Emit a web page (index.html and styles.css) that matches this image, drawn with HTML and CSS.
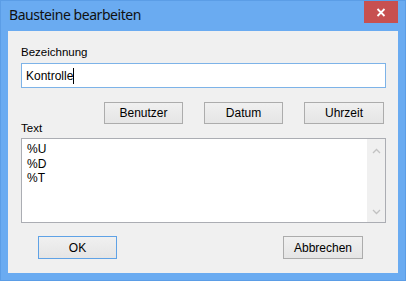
FILE: index.html
```html
<!DOCTYPE html>
<html>
<head>
<meta charset="utf-8">
<link rel="stylesheet" href="styles.css">
</head>
<body>
<div class="window">
  <div class="titlebar">
    <div class="title">Bausteine bearbeiten</div>
    <div class="close">
      <svg width="10" height="9" viewBox="0 0 10 9"><path d="M1.5 1 L8.5 8 M8.5 1 L1.5 8" stroke="#fff" stroke-width="1.8" fill="none"/></svg>
    </div>
  </div>
  <div class="client">
    <div class="label first">Bezeichnung</div>
    <div class="input"><span class="value">Kontrolle</span><span class="caret"></span></div>
    <div class="btnrow">
      <div class="btn">Benutzer</div>
      <div class="btn">Datum</div>
      <div class="btn">Uhrzeit</div>
    </div>
    <div class="label second">Text</div>
    <div class="textarea">
      <div class="lines">
        <div>%U</div>
        <div>%D</div>
        <div>%T</div>
      </div>
      <div class="scrollbar">
        <svg width="9" height="6" viewBox="0 0 9 6"><path d="M1 5 L4.5 1.5 L8 5" stroke="#c2c2c2" stroke-width="1.3" fill="none"/></svg>
        <svg width="9" height="6" viewBox="0 0 9 6"><path d="M1 1 L4.5 4.5 L8 1" stroke="#c2c2c2" stroke-width="1.3" fill="none"/></svg>
      </div>
    </div>
    <div class="bottomrow">
      <div class="btn default">OK</div>
      <div class="btn cancel">Abbrechen</div>
    </div>
  </div>
</div>
</body>
</html>
```
FILE: styles.css
```css
html, body {
  margin: 0;
  padding: 0;
  background: #6aabf1;
}
.window {
  box-sizing: border-box;
  width: 406px;
  height: 281px;
  background: #6aabf1;
  border: 1px solid #5b9de6;
  padding: 0 7px 7px 7px;
  display: flex;
  flex-direction: column;
}
.titlebar {
  height: 30px;
  display: flex;
  align-items: flex-start;
}
.title {
  font-family: "Noto Sans", sans-serif;
  font-size: 14px;
  letter-spacing: -0.45px;
  line-height: 18px;
  color: #111;
  margin-top: 5px;
  margin-left: 1px;
}
.close {
  margin-left: auto;
  width: 34px;
  height: 22px;
  background: #c75050;
  display: flex;
  align-items: center;
  justify-content: center;
}
.client {
  flex: 1;
  background: #f0f0f0;
  padding: 0 12px 0 13px;
  font-family: "Liberation Sans", Arial, sans-serif;
  font-size: 11.5px;
  color: #000;
  display: flex;
  flex-direction: column;
}
.label {
  line-height: 13px;
  height: 13px;
}
.label.first {
  margin-top: 15px;
}
.input {
  margin-top: 4px;
  height: 25px;
  box-sizing: border-box;
  border: 1px solid #7db3e8;
  background: #fff;
  display: flex;
  align-items: center;
  padding-left: 4px;
  font-size: 12px;
}
.caret {
  display: inline-block;
  width: 1px;
  height: 16px;
  background: #000;
}
.btnrow {
  margin-top: 14px;
  display: flex;
  justify-content: flex-end;
  gap: 21px;
  padding-right: 2px;
}
.btn {
  box-sizing: border-box;
  width: 79px;
  height: 22px;
  border: 1px solid #acacac;
  background: linear-gradient(#f0f0f0, #e5e5e5);
  display: flex;
  align-items: center;
  justify-content: center;
  font-size: 12px;
  color: #000;
}
.btnrow .btn:last-child {
  width: 80px;
}
.label.second {
  margin-top: -2px;
}
.textarea {
  margin-top: 3px;
  height: 85px;
  box-sizing: border-box;
  border: 1px solid #abadb3;
  background: #fff;
  display: flex;
}
.lines {
  flex: 1;
  padding: 3px 0 0 5px;
  line-height: 14.5px;
  font-size: 12px;
}
.scrollbar {
  width: 18px;
  background: #f0f0f0;
  display: flex;
  flex-direction: column;
  justify-content: space-between;
  align-items: center;
  padding: 9px 0 7px 0;
}
.bottomrow {
  margin-top: 13px;
  display: flex;
  justify-content: space-between;
  padding-left: 17px;
  padding-right: 23px;
}
.bottomrow .btn {
  height: 23px;
}
.btn.default {
  border-color: #5fa2e6;
  width: 79px;
}
.btn.cancel {
  width: 80px;
}
```
